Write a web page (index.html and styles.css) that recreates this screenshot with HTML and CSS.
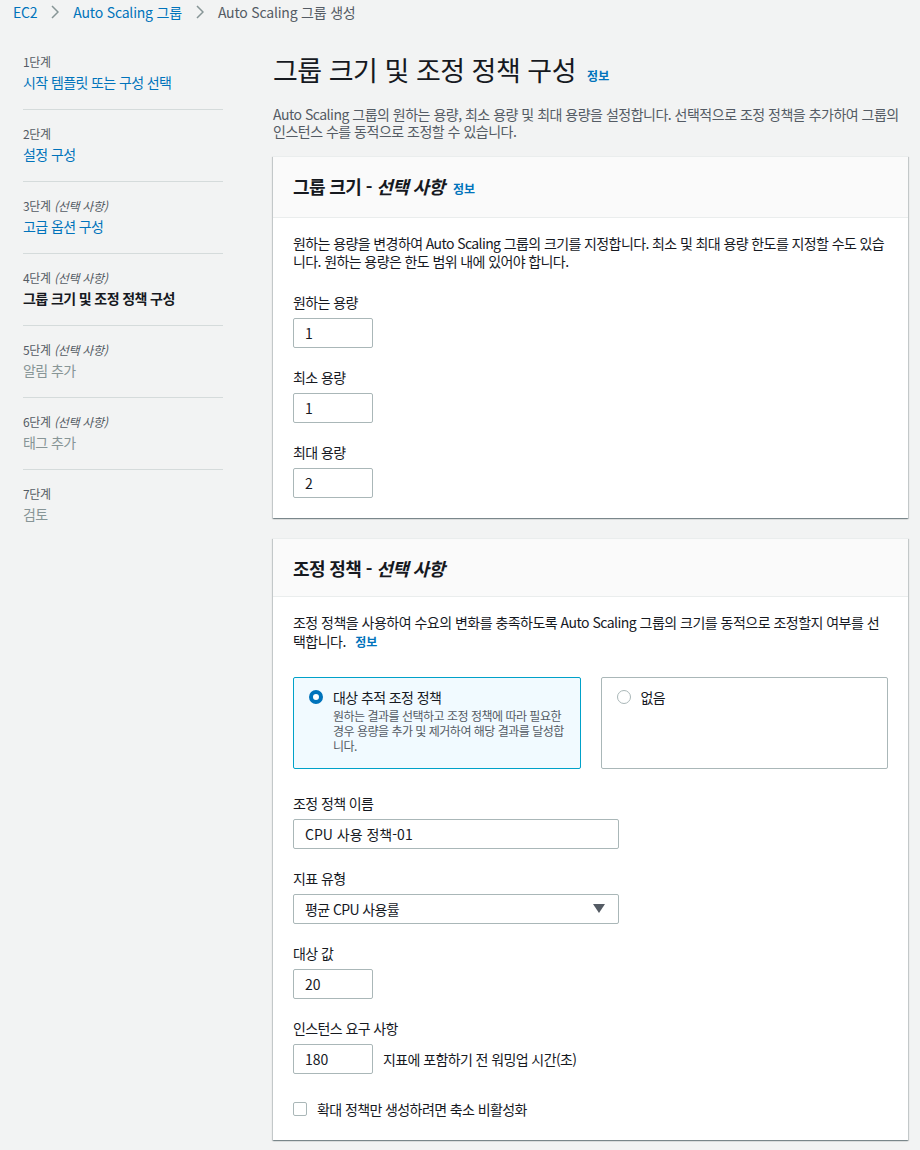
FILE: index.html
```html
<!DOCTYPE html>
<html lang="ko">
<head>
    <meta charset="UTF-8">
    <meta name="viewport" content="width=device-width, initial-scale=1.0">
    <title>Auto Scaling 그룹 생성</title>
    <link rel="stylesheet" href="styles.css">
</head>
<body>

    <nav class="breadcrumbs">
        <a href="#">EC2</a>
        <svg class="crumb-sep" width="8" height="14" viewBox="0 0 8 14"><polyline points="1,1 7,7 1,13" fill="none" stroke="#879596" stroke-width="1.5"/></svg>
        <a href="#">Auto Scaling 그룹</a>
        <svg class="crumb-sep" width="8" height="14" viewBox="0 0 8 14"><polyline points="1,1 7,7 1,13" fill="none" stroke="#879596" stroke-width="1.5"/></svg>
        <span class="crumb-current">Auto Scaling 그룹 생성</span>
    </nav>

    <div class="layout">
        <ul class="steps">
            <li class="step">
                <div class="step-num">1단계</div>
                <a class="step-title" href="#">시작 템플릿 또는 구성 선택</a>
            </li>
            <li class="step">
                <div class="step-num">2단계</div>
                <a class="step-title" href="#">설정 구성</a>
            </li>
            <li class="step">
                <div class="step-num">3단계 <i>(선택 사항)</i></div>
                <a class="step-title" href="#">고급 옵션 구성</a>
            </li>
            <li class="step">
                <div class="step-num">4단계 <i>(선택 사항)</i></div>
                <span class="step-title current">그룹 크기 및 조정 정책 구성</span>
            </li>
            <li class="step">
                <div class="step-num">5단계 <i>(선택 사항)</i></div>
                <span class="step-title disabled">알림 추가</span>
            </li>
            <li class="step">
                <div class="step-num">6단계 <i>(선택 사항)</i></div>
                <span class="step-title disabled">태그 추가</span>
            </li>
            <li class="step">
                <div class="step-num">7단계</div>
                <span class="step-title disabled">검토</span>
            </li>
        </ul>

        <main class="content">
            <h1 class="page-title">그룹 크기 및 조정 정책 구성 <a class="info" href="#">정보</a></h1>
            <p class="page-desc">Auto Scaling 그룹의 원하는 용량, 최소 용량 및 최대 용량을 설정합니다. 선택적으로 조정 정책을 추가하여 그룹의 인스턴스 수를 동적으로 조정할 수 있습니다.</p>

            <section class="card">
                <div class="card-header">
                    <h2>그룹 크기 - <i>선택 사항</i> <a class="info" href="#">정보</a></h2>
                </div>
                <div class="card-body">
                    <p class="card-desc">원하는 용량을 변경하여 Auto Scaling 그룹의 크기를 지정합니다. 최소 및 최대 용량 한도를 지정할 수도 있습니다. 원하는 용량은 한도 범위 내에 있어야 합니다.</p>

                    <div class="field">
                        <label>원하는 용량</label>
                        <input class="input small" type="text" value="1">
                    </div>
                    <div class="field">
                        <label>최소 용량</label>
                        <input class="input small" type="text" value="1">
                    </div>
                    <div class="field">
                        <label>최대 용량</label>
                        <input class="input small" type="text" value="2">
                    </div>
                </div>
            </section>

            <section class="card">
                <div class="card-header">
                    <h2>조정 정책 - <i>선택 사항</i></h2>
                </div>
                <div class="card-body">
                    <p class="card-desc policy-desc">조정 정책을 사용하여 수요의 변화를 충족하도록 Auto Scaling 그룹의 크기를 동적으로 조정할지 여부를 선택합니다. <a class="info" href="#">정보</a></p>

                    <div class="tiles">
                        <div class="tile selected">
                            <span class="radio checked"></span>
                            <div>
                                <div class="tile-title">대상 추적 조정 정책</div>
                                <div class="tile-desc">원하는 결과를 선택하고 조정 정책에 따라 필요한 경우 용량을 추가 및 제거하여 해당 결과를 달성합니다.</div>
                            </div>
                        </div>
                        <div class="tile">
                            <span class="radio"></span>
                            <div>
                                <div class="tile-title">없음</div>
                            </div>
                        </div>
                    </div>

                    <div class="field">
                        <label>조정 정책 이름</label>
                        <input class="input wide" type="text" value="CPU 사용 정책-01">
                    </div>
                    <div class="field">
                        <label>지표 유형</label>
                        <div class="select wide">
                            <span>평균 CPU 사용률</span>
                            <svg width="12" height="10" viewBox="0 0 12 10"><polygon points="0,0 12,0 6,9" fill="#545b64"/></svg>
                        </div>
                    </div>
                    <div class="field">
                        <label>대상 값</label>
                        <input class="input small" type="text" value="20">
                    </div>
                    <div class="field">
                        <label>인스턴스 요구 사항</label>
                        <div class="inline-row">
                            <input class="input small" type="text" value="180">
                            <span>지표에 포함하기 전 워밍업 시간(초)</span>
                        </div>
                    </div>

                    <label class="check-row">
                        <span class="checkbox"></span>
                        확대 정책만 생성하려면 축소 비활성화
                    </label>
                </div>
            </section>
        </main>
    </div>

</body>
</html>
```

FILE: styles.css
```css
body {
    font-family: "Noto Sans CJK KR", "Noto Sans", sans-serif;
    margin: 0;
    padding: 0;
    background-color: #f2f3f3;
    color: #16191f;
    font-size: 14px;
    line-height: 18px;
    letter-spacing: -0.6px;
}

a {
    color: #0073bb;
    text-decoration: none;
}

.breadcrumbs {
    display: flex;
    align-items: center;
    gap: 14px;
    height: 24px;
    padding: 0 13px;
    font-size: 14px;
    letter-spacing: -0.2px;
}

.crumb-current {
    color: #545b64;
}

.layout {
    display: grid;
    grid-template-columns: 200px 635px;
    gap: 50px;
    padding: 14px 0 0 23px;
}

/* left step list */
.steps {
    list-style: none;
    margin: 0;
    padding: 0;
}

.step {
    padding: 16px 0 17px;
    border-bottom: 1px solid #d5dbdb;
}

.step:last-child {
    border-bottom: none;
}

.step-num {
    font-size: 12px;
    line-height: 16px;
    color: #545b64;
    margin-bottom: 2px;
    letter-spacing: -0.3px;
}

.step-title {
    display: block;
    font-size: 14px;
    line-height: 20px;
}

.step-title.current {
    font-weight: bold;
    color: #16191f;
}

.step-title.disabled {
    color: #879596;
}

/* main column */
.page-title {
    font-size: 27px;
    line-height: 36px;
    font-weight: normal;
    margin: 14px 0 0;
    letter-spacing: -0.5px;
}

.info {
    font-size: 12px;
    font-weight: bold;
    letter-spacing: 0;
    margin-left: 4px;
}

.page-desc {
    margin: 12px 0 16px;
    line-height: 17px;
    color: #545b64;
    letter-spacing: -0.5px;
}

.card {
    background: #fff;
    margin-bottom: 20px;
    box-shadow: 0 1px 1px 0 rgba(0, 28, 36, 0.3), 1px 1px 1px 0 rgba(0, 28, 36, 0.15), -1px 1px 1px 0 rgba(0, 28, 36, 0.15);
    border-top: 1px solid #eaeded;
}

.card-header {
    background: #fafafa;
    border-bottom: 1px solid #eaeded;
    padding: 18px 20px 17px;
}

.card-header h2 {
    margin: 0;
    font-size: 18px;
    line-height: 22px;
    font-weight: bold;
}

.card-body {
    padding: 16px 20px 20px;
}

.card-desc {
    margin: 0;
}

.policy-desc {
    letter-spacing: -0.52px;
    line-height: 19px;
}

.policy-desc .info {
    margin-left: 6px;
}

.field {
    margin-top: 20px;
}

.card-desc + .field {
    margin-top: 23px;
}

.field label {
    display: block;
    margin-bottom: 7px;
}

.input {
    box-sizing: border-box;
    height: 30px;
    border: 1px solid #aab7b8;
    border-radius: 2px;
    padding: 0 11px;
    font-family: inherit;
    font-size: 14px;
    color: #16191f;
    background: #fff;
}

.small {
    width: 80px;
}

.wide {
    width: 326px;
}

.select {
    box-sizing: border-box;
    height: 30px;
    border: 1px solid #aab7b8;
    border-radius: 2px;
    padding: 0 13px 0 11px;
    display: flex;
    align-items: center;
    justify-content: space-between;
}

.inline-row {
    display: flex;
    align-items: center;
    gap: 10px;
}

/* radio tiles */
.tiles {
    display: grid;
    grid-template-columns: 1fr 1fr;
    gap: 20px;
    margin-top: 26px;
}

.tiles + .field {
    margin-top: 25px;
}

.tile {
    box-sizing: border-box;
    height: 92px;
    border: 1px solid #aab7b8;
    border-radius: 2px;
    padding: 10px 15px;
    display: flex;
    gap: 10px;
}

.tile.selected {
    border-color: #00a1c9;
    background: #f1faff;
}

.radio {
    flex: none;
    box-sizing: border-box;
    width: 14px;
    height: 14px;
    margin-top: 2px;
    border-radius: 50%;
    border: 1px solid #aab7b8;
    background: #fff;
}

.radio.checked {
    border: 4px solid #0073bb;
}

.tile-title {
    font-size: 14px;
    line-height: 18px;
}

.tile-desc {
    font-size: 12px;
    line-height: 15px;
    color: #545b64;
    margin-top: 2px;
    letter-spacing: -0.5px;
}

.check-row {
    display: flex;
    align-items: center;
    gap: 10px;
    margin-top: 26px;
    padding-bottom: 2px;
}

.checkbox {
    box-sizing: border-box;
    width: 14px;
    height: 14px;
    border: 1px solid #aab7b8;
    border-radius: 2px;
    background: #fff;
}
```
